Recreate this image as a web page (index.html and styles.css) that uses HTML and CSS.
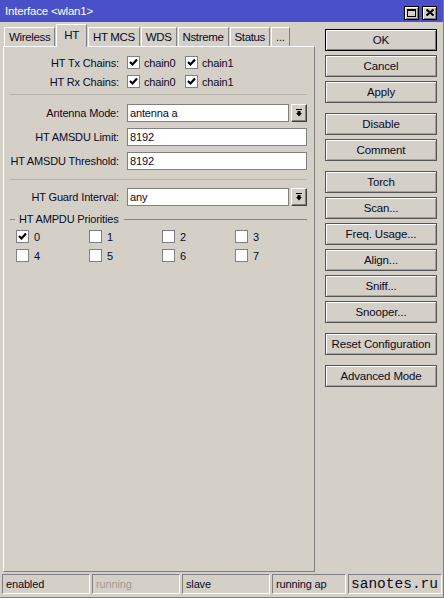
FILE: index.html
```html
<!DOCTYPE html>
<html>
<head>
<meta charset="utf-8">
<title>Interface &lt;wlan1&gt;</title>
<link rel="stylesheet" href="styles.css">
</head>
<body>
<div class="window">
  <div class="titlebar">
    <span class="title">Interface &lt;wlan1&gt;</span>
    <div class="tbtns">
      <span class="tbtn"><svg width="9" height="8" viewBox="0 0 9 8"><rect x="0.5" y="0.5" width="8" height="7" fill="none" stroke="#000"/><rect x="0" y="0" width="9" height="2" fill="#000"/></svg></span>
      <span class="tbtn"><svg width="8" height="7" viewBox="0 0 8 7"><path d="M0.5 0.5 L7.5 6.5 M7.5 0.5 L0.5 6.5" stroke="#000" stroke-width="2"/></svg></span>
    </div>
  </div>
  <div class="main">
    <div class="left">
      <div class="tabs">
        <div class="tab">Wireless</div>
        <div class="tab active">HT</div>
        <div class="tab">HT MCS</div>
        <div class="tab">WDS</div>
        <div class="tab">Nstreme</div>
        <div class="tab">Status</div>
        <div class="tab">...</div>
      </div>
      <div class="panel">
        <div class="row chkrow">
          <div class="lbl">HT Tx Chains:</div>
          <div class="ck-item"><span class="cb on"><svg width="11" height="11" viewBox="0 0 11 11"><path d="M2 5 L4.5 7.5 L9 2.5" fill="none" stroke="#000" stroke-width="2.2"/></svg></span><span>chain0</span></div>
          <div class="ck-item"><span class="cb on"><svg width="11" height="11" viewBox="0 0 11 11"><path d="M2 5 L4.5 7.5 L9 2.5" fill="none" stroke="#000" stroke-width="2.2"/></svg></span><span>chain1</span></div>
        </div>
        <div class="row chkrow">
          <div class="lbl">HT Rx Chains:</div>
          <div class="ck-item"><span class="cb on"><svg width="11" height="11" viewBox="0 0 11 11"><path d="M2 5 L4.5 7.5 L9 2.5" fill="none" stroke="#000" stroke-width="2.2"/></svg></span><span>chain0</span></div>
          <div class="ck-item"><span class="cb on"><svg width="11" height="11" viewBox="0 0 11 11"><path d="M2 5 L4.5 7.5 L9 2.5" fill="none" stroke="#000" stroke-width="2.2"/></svg></span><span>chain1</span></div>
        </div>
        <div class="sep"></div>
        <div class="row field">
          <div class="lbl">Antenna Mode:</div>
          <div class="input">antenna a</div>
          <div class="dd"><svg width="8" height="8" viewBox="0 0 8 8"><rect x="1" y="0" width="6" height="1" fill="#000"/><rect x="2.5" y="2" width="3" height="2" fill="#000"/><path d="M1 4 L7 4 L4 7.5 Z" fill="#000"/></svg></div>
        </div>
        <div class="row field">
          <div class="lbl">HT AMSDU Limit:</div>
          <div class="input">8192</div>
        </div>
        <div class="row field">
          <div class="lbl">HT AMSDU Threshold:</div>
          <div class="input">8192</div>
        </div>
        <div class="sep sep2"></div>
        <div class="row field">
          <div class="lbl">HT Guard Interval:</div>
          <div class="input">any</div>
          <div class="dd"><svg width="8" height="8" viewBox="0 0 8 8"><rect x="1" y="0" width="6" height="1" fill="#000"/><rect x="2.5" y="2" width="3" height="2" fill="#000"/><path d="M1 4 L7 4 L4 7.5 Z" fill="#000"/></svg></div>
        </div>
        <div class="group">
          <span class="gtext">HT AMPDU Priorities</span>
        </div>
        <div class="prio">
          <div class="pitem"><span class="cb on"><svg width="11" height="11" viewBox="0 0 11 11"><path d="M2 5 L4.5 7.5 L9 2.5" fill="none" stroke="#000" stroke-width="2.2"/></svg></span><span>0</span></div>
          <div class="pitem"><span class="cb"></span><span>1</span></div>
          <div class="pitem"><span class="cb"></span><span>2</span></div>
          <div class="pitem"><span class="cb"></span><span>3</span></div>
          <div class="pitem"><span class="cb"></span><span>4</span></div>
          <div class="pitem"><span class="cb"></span><span>5</span></div>
          <div class="pitem"><span class="cb"></span><span>6</span></div>
          <div class="pitem"><span class="cb"></span><span>7</span></div>
        </div>
      </div>
    </div>
    <div class="right">
      <div class="btn ok">OK</div>
      <div class="btn">Cancel</div>
      <div class="btn">Apply</div>
      <div class="btn gap">Disable</div>
      <div class="btn">Comment</div>
      <div class="btn gap">Torch</div>
      <div class="btn">Scan...</div>
      <div class="btn">Freq. Usage...</div>
      <div class="btn">Align...</div>
      <div class="btn">Sniff...</div>
      <div class="btn">Snooper...</div>
      <div class="btn gap">Reset Configuration</div>
      <div class="btn gap">Advanced Mode</div>
    </div>
  </div>
  <div class="status">
    <div class="cell c1">enabled</div>
    <div class="cell c1 dim">running</div>
    <div class="cell c1">slave</div>
    <div class="cell c4">running ap</div>
    <div class="cell c5">sanotes.ru</div>
  </div>
</div>
</body>
</html>
```
FILE: styles.css
```css
* { box-sizing: border-box; }
html, body { margin: 0; padding: 0; }
body {
  background: #d4d0c8;
  font-family: "Liberation Sans", Arial, sans-serif;
  font-size: 11px;
  letter-spacing: -0.15px;
  color: #0a0a1e;
}
.window {
  width: 444px;
  height: 598px;
  display: flex;
  flex-direction: column;
  background: #d4d0c8;
  border-right: 1px solid #808080;
  border-bottom: 1px solid #808080;
}
.titlebar {
  height: 22px;
  flex: none;
  background: #4a50c8;
  display: flex;
  align-items: center;
  justify-content: space-between;
  padding: 0 6px 0 5px;
  color: #fff;
}
.title { font-size: 11.5px; letter-spacing: -0.2px; }
.tbtns { display: flex; gap: 3px; margin-top: 3px; }
.tbtn {
  width: 15px;
  height: 14px;
  background: #d4d0c8;
  border: 1px solid #000;
  box-shadow: inset 1px 1px #fff, inset -1px -1px #808080;
  display: flex;
  align-items: center;
  justify-content: center;
}
.main { display: flex; height: 550px; flex: none; }
.left { width: 318px; display: flex; flex-direction: column; }
.tabs {
  display: flex;
  align-items: flex-end;
  height: 22px;
  margin-top: 2px;
  padding-left: 4px;
  gap: 1px;
  flex: none;
}
.tab {
  height: 19px;
  padding: 0 4px;
  display: flex;
  align-items: center;
  border-top: 1px solid #fff;
  border-left: 1px solid #fff;
  border-right: 1px solid #808080;
  background: #d4d0c8;
  font-size: 11.5px;
  letter-spacing: -0.35px;
}
.tab.active {
  height: 23px;
  margin-bottom: -1px;
  position: relative;
  z-index: 1;
  padding: 0 7px 2px;
}
.panel {
  margin-left: 3px;
  width: 312px;
  flex: 1;
  border-top: 1px solid #fff;
  border-left: 1px solid #fff;
  border-right: 1px solid #808080;
  border-bottom: 1px solid #808080;
  padding: 6px 7px 0 0;
}
.row { display: flex; align-items: center; }
.lbl {
  width: 115px;
  margin-right: 8px;
  text-align: right;
  white-space: nowrap;
  flex: none;
}
.chkrow { height: 19px; }
.ck-item { width: 58px; display: flex; align-items: center; gap: 4px; }
.cb {
  width: 13px;
  height: 13px;
  flex: none;
  background: #fff;
  border: 1px solid #808080;
  display: flex;
  align-items: center;
  justify-content: center;
}
.sep {
  height: 1px;
  background: #b8b4ac;
  margin: 3px 0 9px 6px;
}
.sep2 { margin: 9px 0 8px 6px; }
.field { height: 18px; margin-bottom: 6px; }
.input {
  flex: 1;
  height: 18px;
  background: #fff;
  border: 1px solid #808080;
  padding: 0 2px;
  display: flex;
  align-items: center;
}
.dd {
  width: 16px;
  height: 18px;
  flex: none;
  margin-left: 2px;
  border: 1px solid;
  border-color: #fff #404040 #404040 #fff;
  box-shadow: inset -1px -1px #808080;
  display: flex;
  align-items: center;
  justify-content: center;
  background: #d4d0c8;
}
.group {
  display: flex;
  align-items: center;
  height: 14px;
  margin: 0 0 4px 6px;
}
.group::before {
  content: "";
  width: 5px;
  height: 1px;
  background: #8a8680;
  margin-right: 4px;
}
.group::after {
  content: "";
  flex: 1;
  height: 1px;
  background: #8a8680;
  margin-left: 5px;
}
.prio {
  display: grid;
  grid-template-columns: repeat(4, 73px);
  row-gap: 6px;
  padding-left: 12px;
}
.pitem { display: flex; align-items: center; gap: 5px; height: 13px; }
.right {
  margin-left: 7px;
  width: 112px;
  padding-top: 7px;
  display: flex;
  flex-direction: column;
}
.btn {
  height: 22px;
  margin-bottom: 4px;
  border: 1px solid #555;
  box-shadow: inset 1px 1px #fff, inset -1px -1px #a0a0a0;
  display: flex;
  align-items: center;
  justify-content: center;
  font-size: 11.5px;
}
.btn.ok { border-color: #000; box-shadow: inset 1px 1px #fff, inset -1px -1px #808080; }
.btn.gap { margin-top: 6px; }
.status {
  flex: 1;
  display: flex;
  gap: 2px;
  padding: 2px 0 0 2px;
}
.cell {
  height: 20px;
  border: 1px solid;
  border-color: #808080 #fff #fff #808080;
  padding-left: 3px;
  display: flex;
  align-items: center;
  white-space: nowrap;
  overflow: hidden;
}
.c1 { width: 88px; }
.c4 { width: 74px; }
.c5 {
  width: 94px;
  font-family: "Liberation Mono", "Courier New", monospace;
  font-size: 14.5px;
  letter-spacing: 0;
  padding-left: 2px;
}
.dim { color: #a09c94; }
```
